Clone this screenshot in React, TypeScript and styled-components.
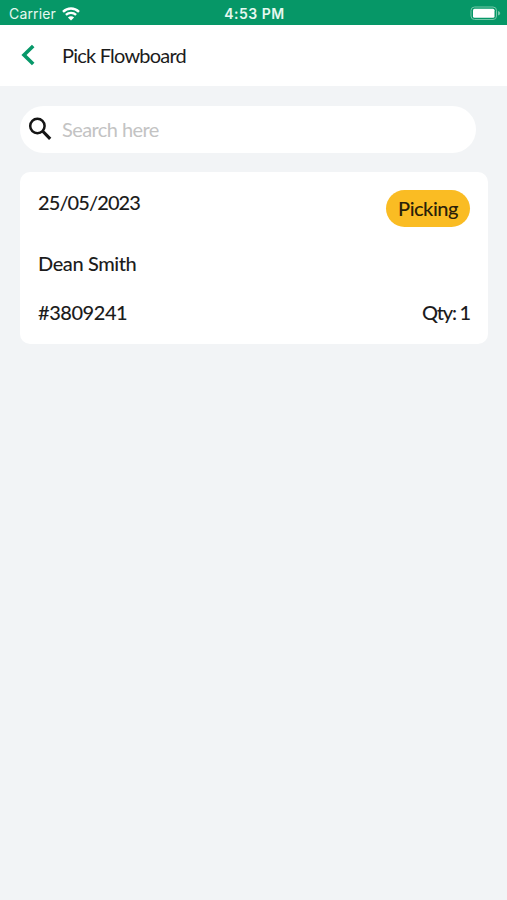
import React from "react";
import styled, { createGlobalStyle } from "styled-components";

const GlobalStyle = createGlobalStyle`
  * { box-sizing: border-box; }
  body { margin: 0; background: #f2f4f6; }
`;

const Screen = styled.div`
  min-height: 900px;
  background: #f2f4f6;
  color: #1c1c1c;
  font-family: Lato, sans-serif;
`;

const StatusBar = styled.div`
  display: grid;
  grid-template-columns: 1fr auto 1fr;
  align-items: center;
  height: 25px;
  padding: 2px 6px 0 8px;
  background: #069767;
  color: #e6f8f0;
  font-family: Inter, sans-serif;
  font-size: 14px;
  line-height: 20px;
`;

const Carrier = styled.div`
  display: flex;
  align-items: center;
  gap: 6px;
  padding-left: 1px;
  letter-spacing: 0.15px;
`;

const Clock = styled.div`
  font-weight: 600;
  font-size: 14px;
  letter-spacing: 0.5px;
`;

const Battery = styled.svg`
  justify-self: end;
`;

const Header = styled.header`
  display: flex;
  align-items: center;
  height: 61px;
  padding: 0 20px 1px;
  background: #fff;
`;

const BackButton = styled.button`
  display: flex;
  width: 42px;
  padding: 0;
  border: 0;
  background: none;
`;

const Title = styled.h1`
  margin: 0;
  font-size: 20px;
  font-weight: 400;
  line-height: 24px;
  letter-spacing: -0.78px;
`;

const Content = styled.main`
  padding: 20px 19px 0 20px;
`;

const SearchBar = styled.label`
  display: flex;
  align-items: center;
  width: 456px;
  height: 47px;
  padding: 0 0 1px 8px;
  border-radius: 24px;
  background: #fff;
`;

const SearchInput = styled.input`
  flex: 1;
  min-width: 0;
  margin: 0 0 1px 10px;
  padding: 0;
  border: 0;
  outline: 0;
  background: none;
  font: 400 20px/24px Lato, sans-serif;
  letter-spacing: -0.58px;
  &::placeholder { color: #c3c3c3; opacity: 1; }
`;

const Card = styled.article`
  height: 172px;
  margin-top: 19px;
  padding: 18px 18px 0;
  border-radius: 10px;
  background: #fff;
`;

const Row = styled.div<{ $height: number }>`
  display: flex;
  align-items: flex-start;
  justify-content: space-between;
  height: ${(p) => p.$height}px;
`;

const Text = styled.span<{ $spacing: number }>`
  font-size: 20px;
  font-weight: 500;
  line-height: 24px;
  white-space: nowrap;
  letter-spacing: ${(p) => p.$spacing}px;
`;

const Badge = styled.span`
  display: flex;
  align-items: center;
  justify-content: center;
  width: 84px;
  height: 37px;
  padding-bottom: 2px;
  border-radius: 19px;
  background: #fabc23;
  color: #292009;
`;

export default function App() {
  return (
    <Screen>
      <GlobalStyle />
      <StatusBar>
        <Carrier>
          Carrier
          <svg width="18" height="14" viewBox="0 0 18 14" fill="none" stroke="#fff" strokeWidth="2.4">
            <path d="M1 4.8C5.6.4 12.4.4 17 4.8M3.9 7.9c2.9-2.7 7.3-2.7 10.2 0" />
            <path d="M9 13.5 5.9 10.4c1.8-1.6 4.4-1.6 6.2 0Z" fill="#fff" stroke="none" />
          </svg>
        </Carrier>
        <Clock>4:53 PM</Clock>
        <Battery width="31" height="15" viewBox="0 0 31 15">
          <rect x="1" y="1" width="25.5" height="12.5" rx="3.5" fill="none" stroke="#74c8a9" />
          <rect x="3" y="2.7" width="21.5" height="9.1" rx="1.5" fill="#fff" />
          <path d="M28 5c1.7.7 2.2 1.4 2.2 2.3S29.7 8.9 28 9.6Z" fill="#74c8a9" />
        </Battery>
      </StatusBar>
      <Header>
        <BackButton aria-label="Back">
          <svg width="16" height="22" viewBox="0 0 16 22" fill="none" stroke="#079869" strokeWidth="3.6">
            <path d="M13.200 2 4 11l9.200 9" />
          </svg>
        </BackButton>
        <Title>Pick Flowboard</Title>
      </Header>
      <Content>
        <SearchBar>
          <svg width="24" height="24" viewBox="0 0 24 24" fill="none" stroke="#151515">
            <circle cx="9.400" cy="9" r="7.200" strokeWidth="2.500" />
            <path d="m14.500 14 7.700 7.800" strokeWidth="3.200" />
          </svg>
          <SearchInput placeholder="Search here" />
        </SearchBar>
        <Card>
          <Row $height={61}>
            <Text $spacing={-0.9}>25/05/2023</Text>
            <Badge>
              <Text $spacing={-0.5}>Picking</Text>
            </Badge>
          </Row>
          <Row $height={49}>
            <Text $spacing={-0.4}>Dean Smith</Text>
          </Row>
          <Row $height={26}>
            <Text $spacing={-0.45}>#3809241</Text>
            <Text $spacing={-1.2}>Qty: 1</Text>
          </Row>
        </Card>
      </Content>
    </Screen>
  );
}
